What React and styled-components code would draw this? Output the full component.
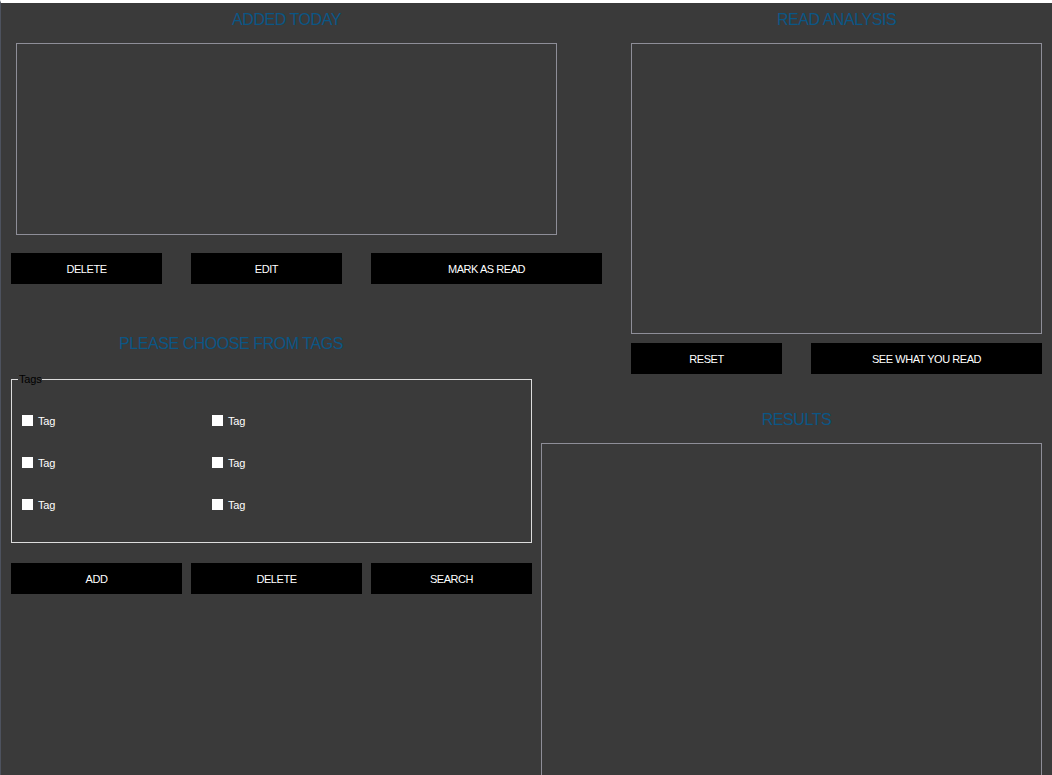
import React from 'react';
import styled, { createGlobalStyle } from 'styled-components';

const GlobalStyle = createGlobalStyle`
  html, body { margin: 0; padding: 0; background: #3a3a3a; }
  body { font-family: "Liberation Sans", Arial, sans-serif; }
  *, *::before, *::after { box-sizing: border-box; }
`;

const Window = styled.div`
  width: 1052px;
  height: 775px;
  overflow: hidden;
  background: #3a3a3a;
  border-top: 3px solid #ffffff;
  border-left: 1px solid #4d525e;
  display: grid;
  grid-template-columns: 540px 90px 1fr;
  grid-template-rows: 327px 70px 1fr;
  grid-template-areas:
    "top top ana"
    "tags . ana"
    "tags res res";
`;

const Section = styled.section`
  grid-area: ${p => p.$area};
  display: flex;
  flex-direction: column;
  align-items: flex-start;
  min-height: 0;
  padding-top: ${p => p.$pt || 0}px;
`;

const Title = styled.h2`
  margin: 0;
  width: ${p => p.$w}px;
  margin-left: ${p => p.$ml || 0}px;
  font-family: "Liberation Sans", Arial, sans-serif;
  font-size: 16px;
  line-height: 20px;
  font-weight: normal;
  letter-spacing: -0.45px;
  color: #0b5685;
  text-align: center;
  white-space: nowrap;
`;

const Frame = styled.div`
  width: ${p => p.$w}px;
  height: ${p => p.$h}px;
  margin-top: ${p => p.$mt}px;
  margin-left: ${p => p.$ml || 0}px;
  border: 1px solid #8e8e98;
  background: transparent;
  flex: none;
`;

const ButtonRow = styled.div`
  display: flex;
  gap: ${p => p.$gap}px;
  margin-top: ${p => p.$mt}px;
  margin-left: ${p => p.$ml || 0}px;
`;

const ActionButton = styled.button`
  width: ${p => p.$w}px;
  height: 31px;
  padding: 0;
  border: none;
  background: #000000;
  color: #ffffff;
  font-family: "Liberation Sans", Arial, sans-serif;
  font-size: 11px;
  letter-spacing: -0.45px;
  cursor: pointer;
`;

const GroupBox = styled.fieldset`
  width: 521px;
  margin: 19px 0 0 10px;
  padding: 29px 10px 32px 10px;
  border: 1px solid #dcdcdc;
  min-inline-size: 0;
`;

const Legend = styled.legend`
  margin-left: -4px;
  padding: 0 1px;
  font-family: "Liberation Sans", Arial, sans-serif;
  font-size: 11px;
  line-height: 13px;
  color: #000000;
  letter-spacing: -0.2px;
`;

const TagGrid = styled.div`
  display: grid;
  grid-template-columns: 190px 190px;
  row-gap: 31px;
`;

const TagLabel = styled.label`
  display: flex;
  align-items: center;
  gap: 5px;
  height: 11px;
  font-family: "Liberation Sans", Arial, sans-serif;
  font-size: 11px;
  color: #ffffff;
  letter-spacing: -0.2px;
  cursor: pointer;
`;

const Check = styled.input.attrs({ type: 'checkbox' })`
  appearance: none;
  -webkit-appearance: none;
  margin: 0;
  width: 11px;
  height: 11px;
  background: #ffffff;
  border: none;
  flex: none;
  &:checked { background: #cfe3f5; }
`;

const tags = ['Tag', 'Tag', 'Tag', 'Tag', 'Tag', 'Tag'];

export default function App() {
  return (
    <>
      <GlobalStyle />
      <Window>
        <Section $area="top" $pt={7}>
          <Title $w={541} $ml={15}>ADDED TODAY</Title>
          <Frame $w={541} $h={192} $mt={13} $ml={15} />
          <ButtonRow $gap={29} $mt={18} $ml={10}>
            <ActionButton $w={151}>DELETE</ActionButton>
            <ActionButton $w={151}>EDIT</ActionButton>
            <ActionButton $w={231}>MARK AS READ</ActionButton>
          </ButtonRow>
        </Section>

        <Section $area="ana" $pt={7}>
          <Title $w={411}>READ ANALYSIS</Title>
          <Frame $w={411} $h={291} $mt={13} />
          <ButtonRow $gap={29} $mt={9}>
            <ActionButton $w={151}>RESET</ActionButton>
            <ActionButton $w={231}>SEE WHAT YOU READ</ActionButton>
          </ButtonRow>
        </Section>

        <Section $area="tags" $pt={4}>
          <Title $w={460}>PLEASE CHOOSE FROM TAGS</Title>
          <GroupBox>
            <Legend>Tags</Legend>
            <TagGrid>
              {tags.map((t, i) => (
                <TagLabel key={i}>
                  <Check />
                  {t}
                </TagLabel>
              ))}
            </TagGrid>
          </GroupBox>
          <ButtonRow $gap={9} $mt={20} $ml={10}>
            <ActionButton $w={171}>ADD</ActionButton>
            <ActionButton $w={171}>DELETE</ActionButton>
            <ActionButton $w={161}>SEARCH</ActionButton>
          </ButtonRow>
        </Section>

        <Section $area="res" $pt={10}>
          <Title $w={501} $ml={5}>RESULTS</Title>
          <Frame $w={501} $h={400} $mt={13} />
        </Section>
      </Window>
    </>
  );
}
